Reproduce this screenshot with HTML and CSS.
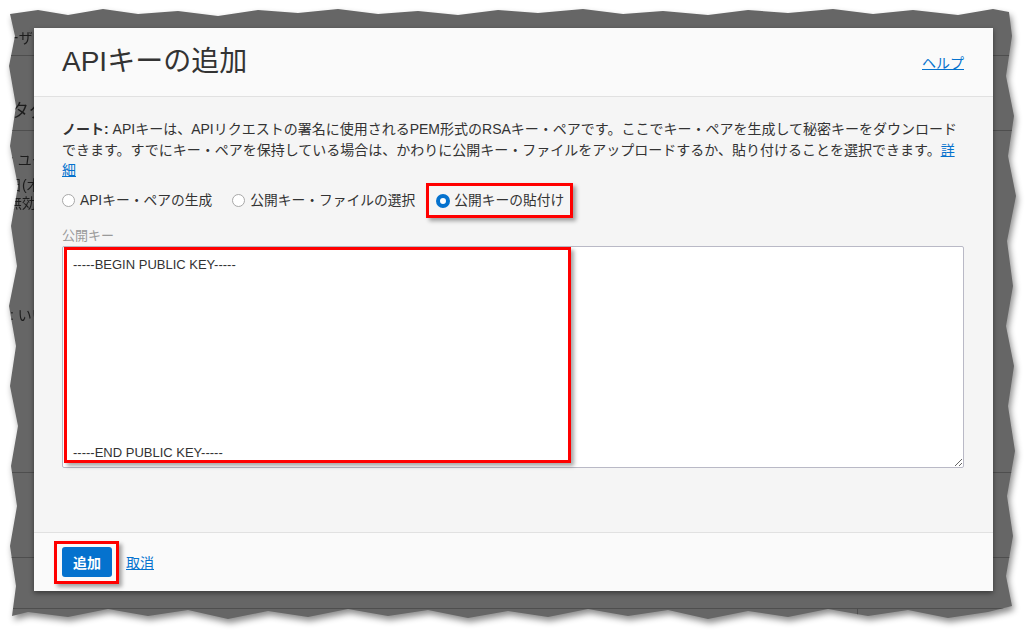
FILE: index.html
```html
<!DOCTYPE html>
<html lang="ja">
<head>
<meta charset="utf-8">
<title>APIキーの追加</title>
<link rel="stylesheet" href="styles.css">
</head>
<body>
<div class="page">
  <div class="shadow">
    <div class="backdrop">
      <div class="bg-row row-a"><span class="clip-a">ユーザー詳細</span></div>
      <div class="bg-row row-b"><span class="clip-b">タグ</span></div>
      <div class="bg-row row-c">
        <div class="bg-line l1">: ユーザー</div>
        <div class="bg-line l2">日(木)</div>
        <div class="bg-line l3">無効</div>
        <div class="bg-line l4">: いいえ</div>
      </div>
      <div class="bg-row row-d"></div>
      <div class="bg-row row-e"></div>
      <div class="row-f"><div class="cell-f"></div></div>
    </div>
  </div>

  <div class="modal">
    <div class="modal-header">
      <h1 class="modal-title">APIキーの追加</h1>
      <a class="link" href="#">ヘルプ</a>
    </div>
    <div class="modal-body">
      <p class="note"><strong>ノート:</strong> APIキーは、APIリクエストの署名に使用されるPEM形式のRSAキー・ペアです。ここでキー・ペアを生成して秘密キーをダウンロードできます。すでにキー・ペアを保持している場合は、かわりに公開キー・ファイルをアップロードするか、貼り付けることを選択できます。<a class="link" href="#">詳細</a></p>
      <div class="radios">
        <label class="radio"><span class="dot"></span><span>APIキー・ペアの生成</span></label>
        <label class="radio"><span class="dot"></span><span>公開キー・ファイルの選択</span></label>
        <label class="radio marked"><span class="dot on"></span><span>公開キーの貼付け</span></label>
      </div>
      <div class="field-label">公開キー</div>
      <div class="ta-wrap">
        <textarea class="key" spellcheck="false">-----BEGIN PUBLIC KEY-----








-----END PUBLIC KEY-----</textarea>
        <div class="mark mark-ta"></div>
      </div>
    </div>
    <div class="modal-footer">
      <div class="btn-wrap">
        <button class="btn-primary" type="button">追加</button>
        <div class="mark mark-btn"></div>
      </div>
      <a class="link cancel" href="#">取消</a>
    </div>
  </div>
</div>
</body>
</html>
```

FILE: styles.css
```css
* { box-sizing: border-box; }

html, body {
  margin: 0;
  padding: 0;
  background: #ffffff;
}

body {
  width: 1028px;
  height: 631px;
  overflow: hidden;
  font-family: "Liberation Sans", "Noto Sans CJK JP", sans-serif;
  color: #333333;
}

.page {
  position: relative;
  padding: 6px 10px 9px 8px;
}

.shadow {
  filter: drop-shadow(2px 4px 3px rgba(0, 0, 0, 0.45));
}

.backdrop {
  height: 616px;
  background: #666666;
  color: #1c1c1c;
  font-size: 14px;
  overflow: hidden;
  clip-path: polygon(
    2px 8px, 30px 4px, 60px 9px, 95px 3px, 130px 8px, 170px 5px, 210px 10px, 250px 4px,
    290px 7px, 330px 3px, 370px 8px, 410px 5px, 450px 9px, 490px 4px, 530px 7px, 575px 3px,
    615px 8px, 655px 5px, 700px 9px, 740px 4px, 780px 7px, 825px 3px, 865px 8px, 905px 4px,
    950px 9px, 985px 3px, 1001px 6px,
    1004px 30px, 998px 70px, 1006px 110px, 1000px 150px, 1008px 190px, 999px 235px,
    1005px 280px, 998px 320px, 1006px 360px, 1000px 400px, 1007px 445px, 999px 490px,
    1005px 530px, 998px 570px, 1004px 600px,
    980px 606px, 940px 612px, 900px 604px, 860px 610px, 820px 603px, 780px 611px,
    740px 605px, 700px 613px, 660px 604px, 620px 610px, 580px 603px, 540px 611px,
    500px 605px, 460px 612px, 420px 604px, 380px 610px, 340px 603px, 300px 611px,
    260px 605px, 220px 613px, 180px 604px, 140px 610px, 100px 603px, 60px 611px,
    20px 606px, 4px 610px,
    8px 580px, 2px 540px, 9px 500px, 3px 460px, 10px 420px, 2px 380px, 8px 340px,
    1px 300px, 9px 260px, 3px 220px, 10px 180px, 2px 140px, 8px 100px, 1px 60px, 7px 30px
  );
}

.bg-row {
  border-bottom: 1px solid #4e4e4e;
  white-space: nowrap;
}

.row-a {
  height: 50px;
  padding-top: 22px;
  line-height: 20px;
}

.clip-a { margin-left: -17px; }

.row-b {
  height: 75px;
  padding-top: 44px;
  line-height: 22px;
  font-size: 18px;
}

.clip-b { margin-left: 3px; }

.row-c {
  height: 342px;
  padding-top: 20px;
}

.bg-line {
  line-height: 18px;
  white-space: nowrap;
}

.l1 { margin-left: 2px; }
.l2 { margin-top: 7px; }
.l3 { margin-top: 0; }
.l4 { margin-top: 94px; margin-left: 2px; }

.row-d { height: 85px; }
.row-e { height: 51px; }

.row-f {
  display: flex;
  height: 20px;
}

.cell-f {
  width: 850px;
  border-right: 1px solid #4e4e4e;
}

/* Modal */
.modal {
  position: absolute;
  left: 34px;
  top: 28px;
  width: 959px;
  height: 563px;
  display: flex;
  flex-direction: column;
  background: #f5f5f5;
  box-shadow: 0 2px 5px rgba(0, 0, 0, 0.45);
}

.modal-header {
  display: flex;
  align-items: center;
  justify-content: space-between;
  height: 69px;
  padding: 0 29px 0 28px;
  background: #fafafa;
  border-bottom: 1px solid #e1e1e1;
}

.modal-title {
  margin: 0;
  font-size: 28px;
  line-height: 34px;
  font-weight: normal;
  color: #333333;
}

.link {
  color: #0572ce;
  text-decoration: underline;
  font-size: 14px;
}

.modal-body {
  flex: 1;
  padding: 22px 29px 0 28px;
}

.note {
  margin: 0 0 10px;
  font-size: 14px;
  line-height: 20.5px;
  color: #333333;
}

.note strong {
  font-weight: bold;
}

.radios {
  display: flex;
  align-items: center;
  gap: 20px;
  height: 20px;
  font-size: 13.75px;
  line-height: 20px;
  color: #333333;
}

.radio {
  position: relative;
  display: flex;
  align-items: center;
  gap: 5px;
  white-space: nowrap;
}

.dot {
  width: 13px;
  height: 13px;
  border-radius: 50%;
  border: 1px solid #a8a8a8;
  background: #ffffff;
  flex: none;
}

.dot.on {
  width: 14px;
  height: 14px;
  border: 4px solid #0572ce;
  background: #ffffff;
}

.radio.marked { margin-left: 1px; gap: 4px; }

.radio.marked::after {
  content: "";
  position: absolute;
  left: -10px;
  top: -8px;
  right: -9px;
  bottom: -7px;
  border: 3px solid #ff0000;
  box-shadow: 3px 3px 4px rgba(0, 0, 0, 0.35);
}

.field-label {
  margin-top: 16.5px;
  margin-bottom: 2px;
  font-size: 13px;
  line-height: 17px;
  color: #9a9a9a;
}

.ta-wrap {
  position: relative;
}

.key {
  display: block;
  width: 902px;
  height: 222px;
  margin: 0;
  padding: 8px 10px 6px;
  border: 1px solid #b9b9c6;
  border-radius: 2px;
  background: #ffffff;
  font-family: "Liberation Sans", "Noto Sans CJK JP", sans-serif;
  font-size: 13px;
  line-height: 20.9px;
  color: #333333;
  overflow: hidden;
  resize: both;
}

.mark {
  position: absolute;
  border: 3px solid #ff0000;
  box-shadow: 3px 3px 4px rgba(0, 0, 0, 0.35);
  pointer-events: none;
}

.mark-ta {
  left: 2px;
  top: 1px;
  width: 507px;
  height: 216px;
}

.modal-footer {
  display: flex;
  align-items: center;
  height: 59px;
  padding: 0 28px;
  background: #fafafa;
  border-top: 1px solid #e1e1e1;
}

.btn-wrap {
  position: relative;
}

.btn-primary {
  display: block;
  width: 50px;
  height: 30px;
  padding: 0;
  border: none;
  border-radius: 3px;
  background: #0572ce;
  color: #ffffff;
  font-family: "Liberation Sans", "Noto Sans CJK JP", sans-serif;
  font-size: 14px;
  font-weight: bold;
}

.mark-btn {
  left: -8px;
  top: -6px;
  right: -7px;
  bottom: -7px;
}

.cancel {
  margin-left: 14px;
}
```
